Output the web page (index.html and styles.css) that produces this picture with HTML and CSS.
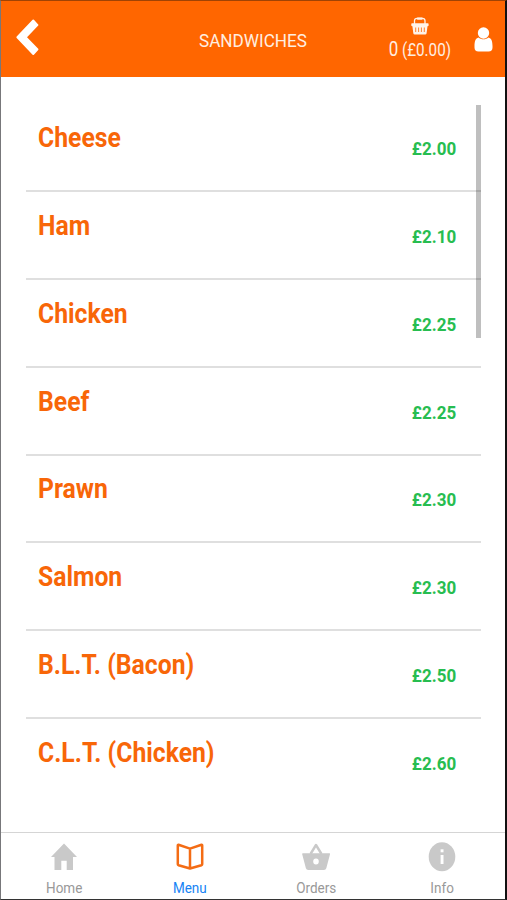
FILE: index.html
```
<!DOCTYPE html>
<html lang="en">
<head>
<meta charset="utf-8">
<title>Sandwiches</title>
<link rel="stylesheet" href="styles.css">
</head>
<body>
<div class="app">
  <header class="header">
    <svg class="back" viewBox="0 0 24 38"><path d="M18.700 0.500L23.200 5.400Q23.700 6 23.200 6.600L11.500 18.700L23.200 30.800Q23.700 31.400 23.200 32L18.700 36.900Q18 37.500 17.300 36.900L0.700 19.400Q0 18.700 0.700 18L17.300 0.500Q18 0 18.700 0.500Z" fill="#fff"/></svg>
    <h1 class="title"><span>SANDWICHES</span></h1>
    <div class="cart">
      <svg class="cart-icon" viewBox="0 0 18 18"><path d="M3.500 7V3.800Q3.500 1.300 6 1.300H11.500Q14 1.300 14 3.800V7" fill="none" stroke="#fff2e8" stroke-width="1.300"/><rect x="5.800" y=".5" width="6" height="2.300" rx="1" fill="#fff2e8"/><path d="M1 6.200H16.800Q17.600 6.200 17.600 7V8.500Q17.600 9.200 16.500 9.200L15.600 16.200Q15.400 17.500 14.200 17.500H3.700Q2.500 17.500 2.300 16.200L1.400 9.200Q.3 9.200.3 8.500V7Q.3 6.200 1 6.200Z" fill="#fff2e8"/><path d="M4.700 10.500V15M7.600 10.500V15M10.400 10.500V15M13.300 10.500V15" stroke="#ff6600" stroke-width=".8"/></svg>
      <p class="cart-text"><span><span class="count">0</span> (£0.00)</span></p>
    </div>
    <svg class="user" viewBox="0 0 18 25"><path d="M4 10.500C1 11.300 0 14.500 0 19V20.500Q0 24.500 4 24.500H14Q18 24.500 18 20.500V19C18 14.500 17 11.300 14 10.500C11.500 12.900 6.500 12.900 4 10.500Z" fill="#fff"/><circle cx="9" cy="6" r="5.700" fill="#fff"/></svg>
  </header>
  <main class="list">
    <div class="row"><span class="name">Cheese</span><span class="price">£2.00</span></div>
    <div class="row"><span class="name">Ham</span><span class="price">£2.10</span></div>
    <div class="row"><span class="name">Chicken</span><span class="price">£2.25</span></div>
    <div class="row"><span class="name">Beef</span><span class="price">£2.25</span></div>
    <div class="row"><span class="name">Prawn</span><span class="price">£2.30</span></div>
    <div class="row"><span class="name">Salmon</span><span class="price">£2.30</span></div>
    <div class="row"><span class="name">B.L.T. (Bacon)</span><span class="price">£2.50</span></div>
    <div class="row"><span class="name">C.L.T. (Chicken)</span><span class="price">£2.60</span></div>
    <div class="scrollbar"></div>
  </main>
  <nav class="tabs">
    <div class="tab"><svg class="tab-icon" viewBox="0 0 28 30"><path d="M14 1.500L27 15H23V28H16.700V18.700H11.300V28H4.500V15H1Z" fill="#c9c9c9"/></svg><span class="label">Home</span></div>
    <div class="tab active"><svg class="tab-icon" viewBox="0 0 28 30"><path d="M14 6.600L2.500 2.700Q1.800 2.600 1.800 3.500V22.300Q1.800 23 2.600 23.300L14 26.500L25.400 23.300Q26.200 23 26.200 22.300V3.500Q26.200 2.600 25.500 2.700Z M14 6.600V26.500" fill="none" stroke="#f46c14" stroke-width="2.500" stroke-linejoin="round"/></svg><span class="label">Menu</span></div>
    <div class="tab"><svg class="tab-icon" viewBox="0 0 28 30"><path d="M8.500 12L14 3L19.500 12" fill="none" stroke="#c9c9c9" stroke-width="2.400" stroke-linejoin="round"/><path fill-rule="evenodd" d="M.8 11.300H27.400Q28.200 11.300 28 12.200L24.300 26.300Q23.800 28 22 28H6.200Q4.400 28 3.900 26.300L.2 12.200Q0 11.300 .8 11.300ZM14 16.500A2.800 3 0 1 0 14 22.500A2.800 3 0 1 0 14 16.500Z" fill="#c9c9c9"/></svg><span class="label">Orders</span></div>
    <div class="tab"><svg class="tab-icon" viewBox="0 0 28 30"><ellipse cx="14" cy="14.700" rx="13.300" ry="14.500" fill="#c9c9c9"/><rect x="12.600" y="7.300" width="2.900" height="3" fill="#fff"/><rect x="12.600" y="13" width="2.900" height="9" fill="#fff"/></svg><span class="label">Info</span></div>
  </nav>
</div>
</body>
</html>
```
FILE: styles.css
```
* { box-sizing: border-box; margin: 0; padding: 0; }
body { width: 507px; height: 900px; overflow: hidden; background: #fff; font-family: Roboto, sans-serif; }
.app { display: flex; flex-direction: column; width: 507px; height: 900px; border-style: solid; border-width: 1px 2px 1px 1px; border-color: #a04304 #111 #333 #77777a; background: #fff; }
.header { display: grid; grid-template-columns: 15px 24px 1fr 64px 22px 20px 11px; height: 76px; flex: none; background: #ff6600; }
.back { grid-column: 2; width: 23px; height: 37px; margin-top: 18px; }
.title { grid-column: 3; padding-left: 159px; font-size: 19px; font-weight: 400; line-height: 24px; margin-top: 28px; color: #ffeee0; white-space: nowrap; }
.title span { display: inline-block; transform: scaleX(.902); transform-origin: 0 50%; }
.cart { grid-column: 4; display: flex; flex-direction: column; align-items: center; padding-top: 16px; }
.cart-icon { width: 18px; height: 18px; margin-right: 1px; }
.cart-text { font-size: 17.500px; line-height: 22px; margin-top: 4px; white-space: nowrap; color: #ffeee0; }
.cart-text > span { display: inline-block; transform: scaleX(.87); }
.count { font-size: 19.500px; }
.user { grid-column: 6; width: 19px; height: 25px; margin-top: 26px; }
.list { position: relative; flex: 1; padding: 27.700px 24px 0 25px; }
.row { display: flex; justify-content: space-between; height: 87.75px; padding: 0 25px 0 12px; border-bottom: 2px solid #dfdfdf; }
.row:nth-child(8) { border-bottom: 0; }
.name { font-size: 28px; font-weight: 700; line-height: 34px; margin-top: 16.700px; color: #f86608; transform: scaleX(.883); transform-origin: 0 50%; white-space: nowrap; }
.price { font-size: 18.500px; font-weight: 700; line-height: 22px; margin-top: 33.700px; color: #27bd50; transform: scaleX(.92); transform-origin: 100% 50%; }
.scrollbar { position: absolute; top: 28px; right: 24px; width: 5px; height: 233px; background: rgba(0, 0, 0, .25); }
.tabs { display: grid; grid-template-columns: repeat(4, 1fr); height: 67px; border-top: 1px solid #d5d5d5; flex: none; }
.tab { display: flex; flex-direction: column; align-items: center; padding-top: 9px; color: #999; }
.tab-icon { width: 28px; height: 30px; }
.label { font-size: 15px; line-height: 18px; margin-top: 7px; transform: scaleX(.9); }
.active .label { color: #1683f5; }
```
